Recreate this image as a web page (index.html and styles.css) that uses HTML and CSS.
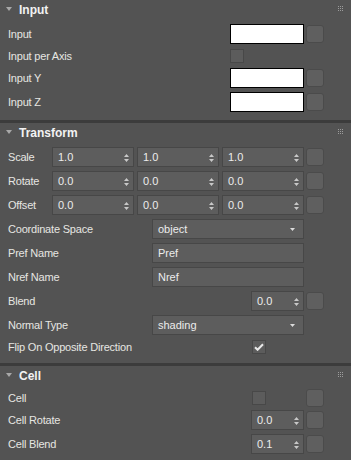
FILE: index.html
```html
<!DOCTYPE html>
<html>
<head>
	<title>Attribute Editor</title>
	<meta charset="utf-8">
	<link rel="stylesheet" href="styles.css">
</head>
<body>
	<div class="panel">
		<!-- Input -->
		<section class="rollout">
			<div class="rollout-head">
				<span class="tri"></span>Input
				<svg class="grip" width="5" height="5" viewBox="0 0 5 5"><g fill="#9c9c9c"><rect x="0" y="0" width="1" height="1"/><rect x="2" y="0" width="1" height="1"/><rect x="4" y="0" width="1" height="1"/><rect x="0" y="2" width="1" height="1"/><rect x="2" y="2" width="1" height="1"/><rect x="4" y="2" width="1" height="1"/><rect x="0" y="4" width="1" height="1"/><rect x="2" y="4" width="1" height="1"/><rect x="4" y="4" width="1" height="1"/></g></svg>
			</div>
			<div class="row">
				<span class="label">Input</span>
				<span class="swatch"></span>
				<span class="key"></span>
			</div>
			<div class="row compact">
				<span class="label">Input per Axis</span>
				<span class="slot-swatch"><span class="check"></span></span>
				<span class="key none"></span>
			</div>
			<div class="row">
				<span class="label">Input Y</span>
				<span class="swatch"></span>
				<span class="key"></span>
			</div>
			<div class="row">
				<span class="label">Input Z</span>
				<span class="swatch"></span>
				<span class="key"></span>
			</div>
		</section>

		<!-- Transform -->
		<section class="rollout">
			<div class="rollout-head">
				<span class="tri"></span>Transform
				<svg class="grip" width="5" height="5" viewBox="0 0 5 5"><g fill="#9c9c9c"><rect x="0" y="0" width="1" height="1"/><rect x="2" y="0" width="1" height="1"/><rect x="4" y="0" width="1" height="1"/><rect x="0" y="2" width="1" height="1"/><rect x="2" y="2" width="1" height="1"/><rect x="4" y="2" width="1" height="1"/><rect x="0" y="4" width="1" height="1"/><rect x="2" y="4" width="1" height="1"/><rect x="4" y="4" width="1" height="1"/></g></svg>
			</div>
			<div class="row">
				<span class="label">Scale</span>
				<div class="spins">
					<div class="field spin">1.0<svg class="arrows" width="5" height="8" viewBox="0 0 5 8"><path d="M0 3h5L2.5 0z M0 5h5L2.5 8z" fill="#c8c8c8"/></svg></div>
					<div class="field spin">1.0<svg class="arrows" width="5" height="8" viewBox="0 0 5 8"><path d="M0 3h5L2.5 0z M0 5h5L2.5 8z" fill="#c8c8c8"/></svg></div>
					<div class="field spin">1.0<svg class="arrows" width="5" height="8" viewBox="0 0 5 8"><path d="M0 3h5L2.5 0z M0 5h5L2.5 8z" fill="#c8c8c8"/></svg></div>
				</div>
				<span class="key"></span>
			</div>
			<div class="row">
				<span class="label">Rotate</span>
				<div class="spins">
					<div class="field spin">0.0<svg class="arrows" width="5" height="8" viewBox="0 0 5 8"><path d="M0 3h5L2.5 0z M0 5h5L2.5 8z" fill="#c8c8c8"/></svg></div>
					<div class="field spin">0.0<svg class="arrows" width="5" height="8" viewBox="0 0 5 8"><path d="M0 3h5L2.5 0z M0 5h5L2.5 8z" fill="#c8c8c8"/></svg></div>
					<div class="field spin">0.0<svg class="arrows" width="5" height="8" viewBox="0 0 5 8"><path d="M0 3h5L2.5 0z M0 5h5L2.5 8z" fill="#c8c8c8"/></svg></div>
				</div>
				<span class="key"></span>
			</div>
			<div class="row">
				<span class="label">Offset</span>
				<div class="spins">
					<div class="field spin">0.0<svg class="arrows" width="5" height="8" viewBox="0 0 5 8"><path d="M0 3h5L2.5 0z M0 5h5L2.5 8z" fill="#c8c8c8"/></svg></div>
					<div class="field spin">0.0<svg class="arrows" width="5" height="8" viewBox="0 0 5 8"><path d="M0 3h5L2.5 0z M0 5h5L2.5 8z" fill="#c8c8c8"/></svg></div>
					<div class="field spin">0.0<svg class="arrows" width="5" height="8" viewBox="0 0 5 8"><path d="M0 3h5L2.5 0z M0 5h5L2.5 8z" fill="#c8c8c8"/></svg></div>
				</div>
				<span class="key"></span>
			</div>
			<div class="row">
				<span class="label">Coordinate Space</span>
				<div class="field wide">object<svg class="drop" width="5" height="3" viewBox="0 0 5 3"><path d="M0 0h5L2.5 3z" fill="#dcdcdc"/></svg></div>
				<span class="key none"></span>
			</div>
			<div class="row">
				<span class="label">Pref Name</span>
				<div class="field wide">Pref</div>
				<span class="key none"></span>
			</div>
			<div class="row">
				<span class="label">Nref Name</span>
				<div class="field wide">Nref</div>
				<span class="key none"></span>
			</div>
			<div class="row">
				<span class="label">Blend</span>
				<div class="field spin short">0.0<svg class="arrows" width="5" height="8" viewBox="0 0 5 8"><path d="M0 3h5L2.5 0z M0 5h5L2.5 8z" fill="#c8c8c8"/></svg></div>
				<span class="key"></span>
			</div>
			<div class="row">
				<span class="label">Normal Type</span>
				<div class="field wide">shading<svg class="drop" width="5" height="3" viewBox="0 0 5 3"><path d="M0 0h5L2.5 3z" fill="#dcdcdc"/></svg></div>
				<span class="key none"></span>
			</div>
			<div class="row compact">
				<span class="label">Flip On Opposite Direction</span>
				<span class="slot-short"><span class="check on"><svg width="10" height="8" viewBox="0 0 10 8"><path d="M1 4.2l2.6 2.6L9 1.2" fill="none" stroke="#e8e8e8" stroke-width="2"/></svg></span></span>
				<span class="key none"></span>
			</div>
		</section>

		<!-- Cell -->
		<section class="rollout last">
			<div class="rollout-head">
				<span class="tri"></span>Cell
				<svg class="grip" width="5" height="5" viewBox="0 0 5 5"><g fill="#9c9c9c"><rect x="0" y="0" width="1" height="1"/><rect x="2" y="0" width="1" height="1"/><rect x="4" y="0" width="1" height="1"/><rect x="0" y="2" width="1" height="1"/><rect x="2" y="2" width="1" height="1"/><rect x="4" y="2" width="1" height="1"/><rect x="0" y="4" width="1" height="1"/><rect x="2" y="4" width="1" height="1"/><rect x="4" y="4" width="1" height="1"/></g></svg>
			</div>
			<div class="row compact">
				<span class="label">Cell</span>
				<span class="slot-short"><span class="check"></span></span>
				<span class="key"></span>
			</div>
			<div class="row">
				<span class="label">Cell Rotate</span>
				<div class="field spin short">0.0<svg class="arrows" width="5" height="8" viewBox="0 0 5 8"><path d="M0 3h5L2.5 0z M0 5h5L2.5 8z" fill="#c8c8c8"/></svg></div>
				<span class="key"></span>
			</div>
			<div class="row">
				<span class="label">Cell Blend</span>
				<div class="field spin short">0.1<svg class="arrows" width="5" height="8" viewBox="0 0 5 8"><path d="M0 3h5L2.5 0z M0 5h5L2.5 8z" fill="#c8c8c8"/></svg></div>
				<span class="key"></span>
			</div>
		</section>
	</div>
</body>
</html>
```

FILE: styles.css
```css
*{
	padding: 0;
	margin: 0;
	box-sizing: border-box;
}
body{
	font-family: "Liberation Sans", Arial, sans-serif;
	font-size: 11px;
	color: #e6e6e2;
	background-color: #3c3c3c;
	width: 351px;
	height: 460px;
	overflow: hidden;
}
.panel{
	display: flex;
	flex-direction: column;
	gap: 3px;
	height: 460px;
}
.rollout{
	background-color: #535353;
	padding-bottom: 6px;
}
.rollout.last{
	flex: 1;
}
.rollout-head{
	display: flex;
	align-items: center;
	height: 22px;
	padding: 0 8px 2px 6px;
	font-size: 12px;
	font-weight: bold;
	color: #f2f2f2;
}
.tri{
	width: 0;
	height: 0;
	border-left: 3px solid transparent;
	border-right: 3px solid transparent;
	border-top: 4px solid #a8a8a8;
	margin-right: 7px;
	margin-top: -2px;
}
.grip{
	margin-left: auto;
	margin-top: -4px;
}

.row{
	display: grid;
	grid-template-columns: 1fr auto 18px;
	column-gap: 2px;
	align-items: center;
	height: 24px;
	padding: 0 27px 0 8px;
}
.row.compact{
	height: 20px;
}
.label{
	white-space: nowrap;
	letter-spacing: -0.2px;
}

.key{
	width: 18px;
	height: 18px;
	background-color: #5f5f5f;
	border: 1px solid #4b4b4b;
	border-radius: 3px;
}
.key.none{
	visibility: hidden;
}

.swatch{
	width: 74px;
	height: 20px;
	background-color: white;
	border: 1px solid black;
}
.slot-swatch{
	width: 74px;
	display: flex;
}
.slot-short{
	width: 53px;
	display: flex;
	padding-left: 1px;
}
.check{
	width: 14px;
	height: 14px;
	background-color: #5c5c5c;
	border: 1px solid #484848;
	display: flex;
	align-items: center;
	justify-content: center;
}

.field{
	height: 20px;
	background-color: #5d5d5d;
	border: 1px solid #474747;
	display: flex;
	align-items: center;
	padding: 0 4px 0 5px;
	color: #ececec;
}
.spins{
	display: flex;
	gap: 3px;
}
.spin{
	width: 82px;
	justify-content: space-between;
}
.spin.short{
	width: 53px;
}
.wide{
	width: 152px;
	justify-content: space-between;
	padding-right: 8px;
}
.arrows{
	margin-top: 1px;
}
```
